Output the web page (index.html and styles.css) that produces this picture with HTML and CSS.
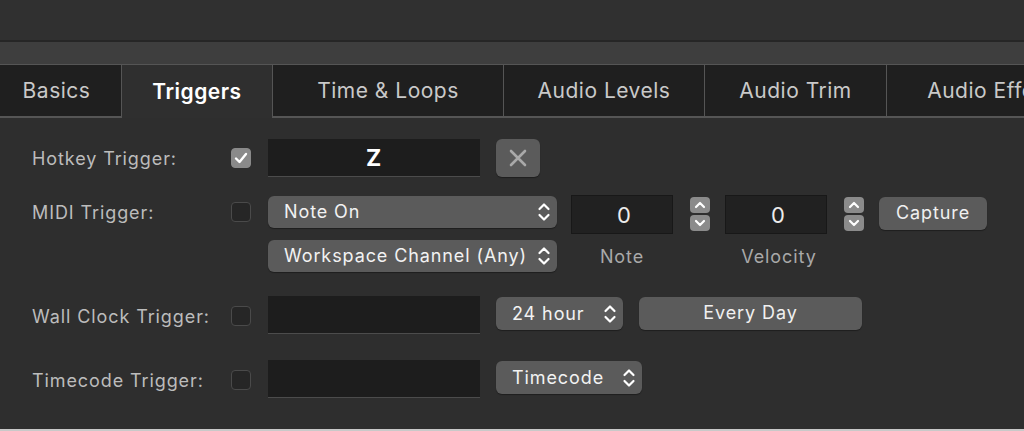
FILE: index.html
```html
<!DOCTYPE html>
<html lang="en">
  <head>
    <meta charset="UTF-8" />
    <title>Triggers</title>
    <link rel="stylesheet" href="styles.css">
  </head>
  <body>
    <div class="window">
      <div class="titlebar"></div>
      <div class="toolbar"></div>
      <div class="tabs">
        <div class="tab tab-basics">Basics</div>
        <div class="tab tab-triggers selected">Triggers</div>
        <div class="tab tab-time">Time &amp; Loops</div>
        <div class="tab tab-levels">Audio Levels</div>
        <div class="tab tab-trim">Audio Trim</div>
        <div class="tab tab-effects">Audio Effects</div>
      </div>

      <div class="content">
        <!-- hotkey -->
        <div class="row row-hotkey">
          <div class="label">Hotkey Trigger:</div>
          <div class="check checked">
            <svg width="14" height="12" viewBox="0 0 14 12"><polyline points="2,6.5 5.5,10 12,2" fill="none" stroke="#fff" stroke-width="2.4" stroke-linecap="round" stroke-linejoin="round"/></svg>
          </div>
          <div class="field key-field">Z</div>
          <div class="btn clear-btn">
            <svg width="18" height="18" viewBox="0 0 18 18"><path d="M2 2 L16 16 M16 2 L2 16" stroke="#a9a9a9" stroke-width="2.6" stroke-linecap="round"/></svg>
          </div>
        </div>

        <!-- midi -->
        <div class="row row-midi">
          <div class="label">MIDI Trigger:</div>
          <div class="check"></div>
          <div class="popup popup-wide">
            <span>Note On</span>
            <svg class="chev" width="14" height="24" viewBox="0 0 14 24"><path d="M2.5 9 L7 4.5 L11.5 9 M2.5 15 L7 19.5 L11.5 15" fill="none" stroke="#fff" stroke-width="2.2" stroke-linecap="round" stroke-linejoin="round"/></svg>
          </div>
          <div class="field num-field">0</div>
          <div class="stepper">
            <div class="step"><svg width="12" height="8" viewBox="0 0 12 8"><path d="M2 6 L6 2 L10 6" fill="none" stroke="#fff" stroke-width="2.2" stroke-linecap="round" stroke-linejoin="round"/></svg></div>
            <div class="step"><svg width="12" height="8" viewBox="0 0 12 8"><path d="M2 2 L6 6 L10 2" fill="none" stroke="#fff" stroke-width="2.2" stroke-linecap="round" stroke-linejoin="round"/></svg></div>
          </div>
          <div class="field num-field">0</div>
          <div class="stepper">
            <div class="step"><svg width="12" height="8" viewBox="0 0 12 8"><path d="M2 6 L6 2 L10 6" fill="none" stroke="#fff" stroke-width="2.2" stroke-linecap="round" stroke-linejoin="round"/></svg></div>
            <div class="step"><svg width="12" height="8" viewBox="0 0 12 8"><path d="M2 2 L6 6 L10 2" fill="none" stroke="#fff" stroke-width="2.2" stroke-linecap="round" stroke-linejoin="round"/></svg></div>
          </div>
          <div class="btn capture-btn">Capture</div>
        </div>

        <div class="row row-channel">
          <div class="popup popup-wide">
            <span>Workspace Channel (Any)</span>
            <svg class="chev" width="14" height="24" viewBox="0 0 14 24"><path d="M2.5 9 L7 4.5 L11.5 9 M2.5 15 L7 19.5 L11.5 15" fill="none" stroke="#fff" stroke-width="2.2" stroke-linecap="round" stroke-linejoin="round"/></svg>
          </div>
          <div class="caption caption-note">Note</div>
          <div class="caption caption-velocity">Velocity</div>
        </div>

        <!-- wall clock -->
        <div class="row row-clock">
          <div class="label">Wall Clock Trigger:</div>
          <div class="check"></div>
          <div class="field"></div>
          <div class="popup popup-hour">
            <span>24 hour</span>
            <svg class="chev" width="14" height="24" viewBox="0 0 14 24"><path d="M2.5 9 L7 4.5 L11.5 9 M2.5 15 L7 19.5 L11.5 15" fill="none" stroke="#fff" stroke-width="2.2" stroke-linecap="round" stroke-linejoin="round"/></svg>
          </div>
          <div class="btn day-btn">Every Day</div>
        </div>

        <!-- timecode -->
        <div class="row row-timecode">
          <div class="label">Timecode Trigger:</div>
          <div class="check"></div>
          <div class="field"></div>
          <div class="popup popup-tc">
            <span>Timecode</span>
            <svg class="chev" width="14" height="24" viewBox="0 0 14 24"><path d="M2.5 9 L7 4.5 L11.5 9 M2.5 15 L7 19.5 L11.5 15" fill="none" stroke="#fff" stroke-width="2.2" stroke-linecap="round" stroke-linejoin="round"/></svg>
          </div>
        </div>
      </div>
      <div class="footer"></div>
    </div>
  </body>
</html>
```

FILE: styles.css
```css
body {
  margin: 0;
  background-color: #2e2e2e;
  font-family: Inter, 'Noto Sans', sans-serif;
  font-size: 18px;
  letter-spacing: 0.9px;
  color: #e6e6e6;
  overflow: hidden;
}
.window {
  width: 1024px;
  height: 431px;
  display: flex;
  flex-direction: column;
  overflow: hidden;
}
.titlebar {
  height: 40px;
  background-color: #303030;
  border-bottom: 2px solid #262626;
  flex-shrink: 0;
}
.toolbar {
  height: 22px;
  background-color: #3e3e3e;
  flex-shrink: 0;
}
.tabs {
  display: flex;
  height: 54px;
  flex-shrink: 0;
}
.tab {
  flex-shrink: 0;
  box-sizing: border-box;
  display: flex;
  align-items: center;
  justify-content: center;
  background-color: #1f1f1f;
  border-top: 1px solid #555;
  border-right: 1px solid #555;
  border-bottom: 2px solid #555;
  font-size: 21px;
  letter-spacing: 0.5px;
  color: #c9c9c9;
  padding-bottom: 1px;
  white-space: nowrap;
}
.tab-basics { width: 122px; padding-right: 8px; }
.tab-triggers { width: 152px; }
.tab-time { width: 231px; }
.tab-levels { width: 201px; }
.tab-trim { width: 182px; }
.tab-effects { width: 220px; }
.tab.selected {
  background-color: #2f2f2f;
  border-left: 1px solid #555;
  border-bottom: none;
  margin-left: -1px;
  color: #fff;
  font-weight: 600;
}
.content {
  flex: 1;
  background-color: #2e2e2e;
  padding: 21px 0 0 32px;
}
.footer {
  height: 2px;
  background-color: #c9c9c9;
  flex-shrink: 0;
}
.row {
  display: flex;
  align-items: flex-start;
}
.label {
  width: 199px;
  flex-shrink: 0;
  color: #bcbcbc;
}
.row-hotkey .label { margin-top: 9px; }
.row-hotkey .check { margin-top: 9px; }
.row-midi { margin-top: 18px; }
.row-midi .label { margin-top: 7px; }
.row-midi .check { margin-top: 7px; }
.row-channel { margin-top: 6px; padding-left: 236px; }
.row-clock { margin-top: 24px; }
.row-clock .label, .row-clock .check { margin-top: 10px; }
.row-timecode { margin-top: 26px; }
.row-timecode .label, .row-timecode .check { margin-top: 10px; }

.check {
  width: 20px;
  height: 20px;
  box-sizing: border-box;
  border-radius: 4px;
  background-color: #262626;
  border: 1px solid #4a4a4a;
  margin-right: 17px;
  display: flex;
  align-items: center;
  justify-content: center;
  flex-shrink: 0;
}
.check.checked {
  background-color: #8a8a8a;
  border-color: #8a8a8a;
}
.field {
  width: 212px;
  height: 38px;
  box-sizing: border-box;
  background-color: #1d1d1d;
  border-bottom: 1px solid #4c4c4c;
  flex-shrink: 0;
}
.key-field {
  display: flex;
  align-items: center;
  justify-content: center;
  font-size: 23px;
  font-weight: 700;
  color: #fff;
}
.num-field {
  width: 102px;
  height: 39px;
  border: 1px solid #181818;
  background-color: #212121;
  display: flex;
  align-items: center;
  justify-content: center;
  padding-left: 5px;
  font-size: 22px;
  color: #ececec;
}
.btn {
  box-sizing: border-box;
  background-color: #5b5b5b;
  border-radius: 6px;
  box-shadow: 0 1px 1px rgba(0, 0, 0, 0.35);
  display: flex;
  align-items: center;
  justify-content: center;
  color: #f0f0f0;
  flex-shrink: 0;
}
.clear-btn {
  width: 44px;
  height: 38px;
  margin-left: 16px;
}
.capture-btn {
  width: 108px;
  height: 33px;
  margin-top: 2px;
  padding-bottom: 2px;
}
.day-btn {
  width: 223px;
  height: 33px;
  margin-top: 1px;
  margin-left: 16px;
  padding-bottom: 2px;
}
.popup {
  box-sizing: border-box;
  height: 32px;
  background-color: #5b5b5b;
  border-radius: 6px;
  box-shadow: 0 1px 1px rgba(0, 0, 0, 0.35);
  display: flex;
  align-items: center;
  justify-content: space-between;
  padding: 0 6px 0 16px;
  color: #f2f2f2;
  flex-shrink: 0;
  white-space: nowrap;
}
.popup span { padding-bottom: 1px; }
.popup-wide { width: 289px; }
.row-midi .popup { margin-top: 1px; margin-right: 14px; }
.popup-hour {
  width: 127px;
  height: 33px;
  margin-left: 16px;
  margin-top: 1px;
}
.popup-tc {
  width: 146px;
  height: 33px;
  margin-left: 16px;
  margin-top: 1px;
}
.stepper {
  width: 20px;
  margin: 2px 15px 0 17px;
  display: flex;
  flex-direction: column;
  gap: 2px;
  flex-shrink: 0;
}
.step {
  height: 16px;
  background-color: #8b8b8b;
  border-radius: 4px;
  display: flex;
  align-items: center;
  justify-content: center;
}
.caption {
  color: #a9a9a9;
  text-align: center;
  margin-top: 6px;
}
.caption-note { width: 102px; margin-left: 14px; }
.caption-velocity { width: 102px; margin-left: 55px; }
```
